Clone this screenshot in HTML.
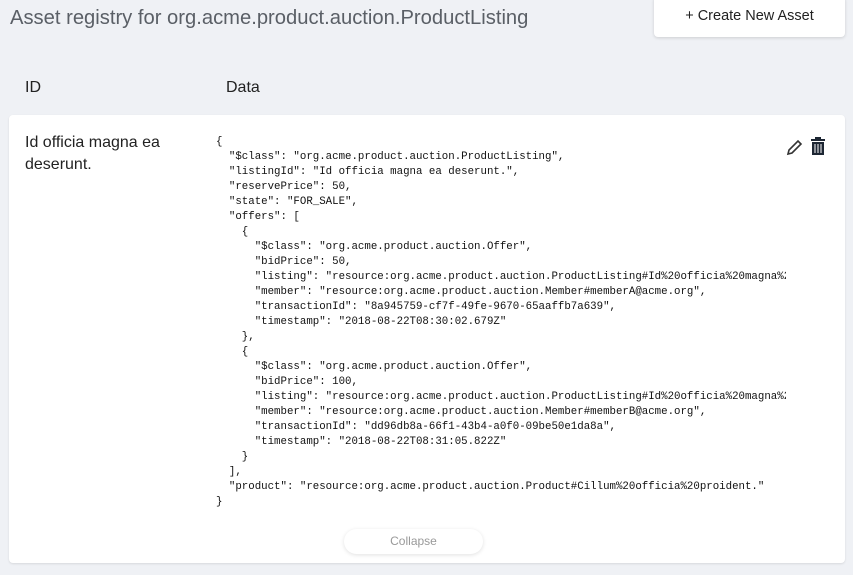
<!DOCTYPE html>
<html><head><style>
body{margin:0;width:853px;height:575px;background:#eff1f5;font-family:"Liberation Sans",sans-serif;position:relative;overflow:hidden}
.title{position:absolute;left:10px;top:7px;font-size:20.2px;color:#5a5f66}
.btn{position:absolute;left:654px;top:-4px;width:191px;height:41px;background:#fff;border-radius:4px;box-shadow:0 1px 3px rgba(0,0,0,.15);font-size:14.5px;color:#222;text-align:center;line-height:40px}
.h{position:absolute;top:79px;font-size:16px;color:#222}
.card{position:absolute;left:9px;top:115px;width:836px;height:448px;background:#fff;border-radius:4px;box-shadow:0 1px 2px rgba(0,0,0,.1)}
.id{position:absolute;left:16px;top:17px;font-size:16px;line-height:22px;color:#222;width:170px}
pre{position:absolute;left:207px;top:20px;margin:0;width:570px;overflow:hidden;font-family:"Liberation Mono",monospace;font-size:10.75px;line-height:15px;color:#111}
.col{position:absolute;left:335px;top:414px;width:139px;height:25px;border-radius:13px;background:#fff;box-shadow:0 1px 4px rgba(0,0,0,.12);font-size:12px;color:#999;text-align:center;line-height:25px}
</style></head><body>
<div class="title">Asset registry for org.acme.product.auction.ProductListing</div>
<div class="btn">+ Create New Asset</div>
<div class="h" style="left:25px">ID</div>
<div class="h" style="left:226px">Data</div>
<div class="card">
<div class="id">Id officia magna ea deserunt.</div>
<pre>{
  "$class": "org.acme.product.auction.ProductListing",
  "listingId": "Id officia magna ea deserunt.",
  "reservePrice": 50,
  "state": "FOR_SALE",
  "offers": [
    {
      "$class": "org.acme.product.auction.Offer",
      "bidPrice": 50,
      "listing": "resource:org.acme.product.auction.ProductListing#Id%20officia%20magna%20ea",
      "member": "resource:org.acme.product.auction.Member#memberA@acme.org",
      "transactionId": "8a945759-cf7f-49fe-9670-65aaffb7a639",
      "timestamp": "2018-08-22T08:30:02.679Z"
    },
    {
      "$class": "org.acme.product.auction.Offer",
      "bidPrice": 100,
      "listing": "resource:org.acme.product.auction.ProductListing#Id%20officia%20magna%20ea",
      "member": "resource:org.acme.product.auction.Member#memberB@acme.org",
      "transactionId": "dd96db8a-66f1-43b4-a0f0-09be50e1da8a",
      "timestamp": "2018-08-22T08:31:05.822Z"
    }
  ],
  "product": "resource:org.acme.product.auction.Product#Cillum%20officia%20proident."
}</pre>
<svg style="position:absolute;left:777px;top:23px" width="18" height="18" viewBox="0 0 18 18"><path d="M2 16l1-4L12 3l3 3-9 9z" fill="none" stroke="#333" stroke-width="1.6"/></svg>
<svg style="position:absolute;left:801px;top:22px" width="16" height="19" viewBox="0 0 16 19"><rect x="1" y="2" width="14" height="2" fill="#1d2633"/><rect x="5" y="0" width="6" height="2" fill="#1d2633"/><path d="M2 5h12v13H2z" fill="#1d2633"/><path d="M5 7v9M8 7v9M11 7v9" stroke="#fff" stroke-width="1"/></svg>
<div class="col">Collapse</div>
</div>
</body></html>
